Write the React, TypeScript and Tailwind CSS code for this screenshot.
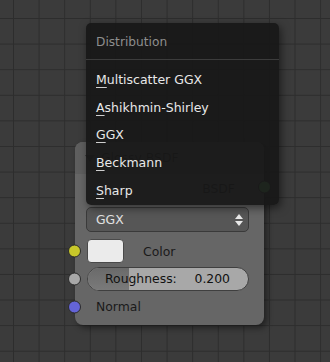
import React from "react";

const items = [
  ["M", "ultiscatter GGX"],
  ["A", "shikhmin-Shirley"],
  ["G", "GX"],
  ["B", "eckmann"],
  ["S", "harp"],
];

function Socket({ color, side }: { color: string; side: "left" | "right" }) {
  return (
    <span
      className={`absolute top-1/2 -translate-y-1/2 w-[13px] h-[13px] rounded-full border border-[#2a2a2a] ${color} ${
        side === "left" ? "left-[-7px]" : "right-[-7px]"
      }`}
    />
  );
}

export default function App() {
  return (
    <div
      className="relative w-[330px] h-[362px] overflow-hidden bg-[#3b3b3b] bg-[image:linear-gradient(to_right,#2d2d2d_1px,transparent_1px),linear-gradient(to_bottom,#2d2d2d_1px,transparent_1px)] bg-[size:25.6px_25.6px] bg-[position:13px_18px]"
      style={{ fontFamily: '"DejaVu Sans", Verdana, sans-serif' }}
    >
      {/* Node */}
      <div className="absolute left-[75px] top-[142px] w-[189px] h-[183px] rounded-[8px] bg-[#666666] shadow-[3px_3px_6px_rgba(0,0,0,0.45)] flex flex-col">
        <div className="h-[32px] rounded-t-[8px] bg-[#5e5e5e] flex items-center pl-[10px] gap-[6px] text-[12.4px] text-[#1a1a1a]">
          <span className="w-0 h-0 border-l-[5px] border-r-[5px] border-t-[7px] border-l-transparent border-r-transparent border-t-[#333]" />
          <span>Glossy BSDF</span>
        </div>
        <div className="relative h-[26px] flex items-center justify-end pr-[29px] text-[12.4px] text-[#1a1a1a]">
          <span className="mt-[4px]">BSDF</span>
          <Socket color="bg-[#63c763]" side="right" />
        </div>
        <div className="ml-[11px] mt-[7px] w-[163px] h-[25px] rounded-[5px] bg-[#565656] border border-[#3a3a3a] flex items-center justify-between pl-[9px] pr-[5px] text-[12.4px] text-[#e2e2e2]">
          <span className="mt-[1px]">GGX</span>
          <span className="flex flex-col items-center gap-[2px]">
            <span className="w-0 h-0 border-l-[4px] border-r-[4px] border-b-[5px] border-l-transparent border-r-transparent border-b-[#e8e8e8]" />
            <span className="w-0 h-0 border-l-[4px] border-r-[4px] border-t-[5px] border-l-transparent border-r-transparent border-t-[#e8e8e8]" />
          </span>
        </div>
        <div className="relative mt-[7px] h-[24px] flex items-center pl-[12px]">
          <Socket color="bg-[#c8c82a]" side="left" />
          <span className="w-[37px] h-[24px] rounded-[4px] bg-[#ebebeb] border border-[#4a4a4a]" />
          <span className="ml-[19px] mt-[2px] text-[12.4px] text-[#1a1a1a]">Color</span>
        </div>
        <div className="relative mt-[4px] h-[24px] flex items-center pl-[12px]">
          <Socket color="bg-[#a8a8a8]" side="left" />
          <div className="relative w-[162px] h-[24px] rounded-full border border-[#3f3f3f] overflow-hidden bg-[#a8a8a8] flex items-center justify-between pl-[17px] pr-[18px] text-[12.4px] text-[#111]">
            <span className="absolute left-0 top-0 bottom-0 w-[41px] bg-[linear-gradient(to_bottom,#6a6a6a,#7a7a7a)]" />
            <span className="relative mt-[1px]">Roughness:</span>
            <span className="relative mt-[1px]">0.200</span>
          </div>
        </div>
        <div className="relative mt-[4px] h-[24px] flex items-center pl-[21px] text-[12.4px] text-[#1a1a1a]">
          <Socket color="bg-[#6464d8]" side="left" />
          <span className="mt-[1px]">Normal</span>
        </div>
      </div>

      {/* Dropdown menu */}
      <div className="absolute left-[86px] top-[23px] w-[193px] h-[182px] rounded-[5px] bg-[rgba(24,24,24,0.93)] shadow-[2px_3px_8px_rgba(0,0,0,0.5)] flex flex-col">
        <div className="h-[37px] flex items-center pl-[10px] pt-[3px] text-[12.2px] text-[#8e8e8e]">Distribution</div>
        <div className="h-px bg-[#3c3c3c]" />
        <div className="pt-[6px] flex flex-col">
          {items.map(([f, rest]) => (
            <div key={f + rest} className="h-[27.75px] flex items-center pl-[10px] text-[12.5px] text-[#e8e8e8]">
              <span className="underline underline-offset-[3px] decoration-[#cfcfcf]">{f}</span>
              <span>{rest}</span>
            </div>
          ))}
        </div>
      </div>
    </div>
  );
}
